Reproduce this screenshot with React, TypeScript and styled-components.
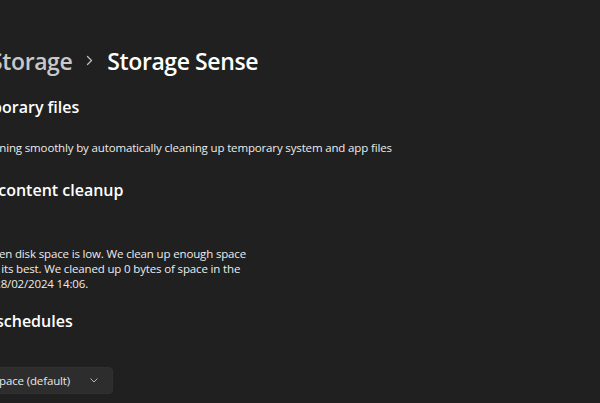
import styled, { createGlobalStyle } from "styled-components";

const GlobalStyle = createGlobalStyle`
  html, body {
    margin: 0;
    padding: 0;
    background: #202020;
    overflow: hidden;
  }
  body {
    font-family: "Open Sans", "Noto Sans", sans-serif;
    color: #ffffff;
  }
`;

// the window is scrolled/cropped so the left column sits off-screen
const Page = styled.main`
  display: flex;
  flex-direction: column;
  align-items: flex-start;
  width: 800px;
  height: 403px;
  padding-top: 43px;
  margin-left: -118px;
  box-sizing: border-box;
`;

const Breadcrumb = styled.div<{ $shift: number }>`
  display: flex;
  align-items: center;
  gap: 14px;
  height: 35px;
  margin-left: ${(p) => p.$shift}px;
  font-size: 23px;
  font-weight: 600;
  letter-spacing: -0.4px;
  white-space: nowrap;
`;

const Crumb = styled.span<{ $current?: boolean }>`
  color: ${(p) => (p.$current ? "#ffffff" : "#c8c8c8")};
`;

const SectionTitle = styled.h2<{ $mt: number; $shift: number }>`
  margin: ${(p) => p.$mt}px 0 0 ${(p) => p.$shift}px;
  height: 24px;
  line-height: 24px;
  font-size: 16px;
  font-weight: 600;
  white-space: nowrap;
`;

const BodyText = `
  font-size: 11.5px;
  letter-spacing: -0.15px;
  color: #ececec;
`;

const CheckRow = styled.label<{ $mt: number; $shift: number }>`
  display: flex;
  align-items: center;
  gap: 12px;
  margin: ${(p) => p.$mt}px 0 0 ${(p) => p.$shift}px;
  height: 24px;
  white-space: nowrap;
  ${BodyText}
`;

const CheckBox = styled.span`
  display: inline-flex;
  align-items: center;
  justify-content: center;
  width: 18px;
  height: 18px;
  border-radius: 4px;
  background: #4cc2ff;
`;

const ToggleRow = styled.div<{ $mt: number }>`
  display: flex;
  align-items: center;
  gap: 12px;
  margin-top: ${(p) => p.$mt}px;
  height: 24px;
  ${BodyText}
`;

const Switch = styled.span`
  position: relative;
  width: 38px;
  height: 18px;
  border-radius: 10px;
  border: 1px solid #cfcfcf;
  box-sizing: border-box;

  &::after {
    content: "";
    position: absolute;
    left: 4px;
    top: 4px;
    width: 8px;
    height: 8px;
    border-radius: 50%;
    background: #cfcfcf;
  }
`;

const Description = styled.p<{ $mt: number; $shift: number }>`
  margin: ${(p) => p.$mt}px 0 0 ${(p) => p.$shift}px;
  width: 374px;
  line-height: 15px;
  ${BodyText}
`;

const FieldLabel = styled.div<{ $mt: number }>`
  margin-top: ${(p) => p.$mt}px;
  height: 20px;
  line-height: 20px;
  ${BodyText}
`;

const Select = styled.button<{ $mt: number; $shift: number }>`
  display: flex;
  align-items: center;
  justify-content: space-between;
  margin: ${(p) => p.$mt}px 0 0 ${(p) => p.$shift}px;
  width: 236px;
  height: 27px;
  padding: 0 14px 0 9px;
  border: 1px solid #303030;
  border-radius: 4px;
  background: #2d2d2d;
  font-family: inherit;
  white-space: nowrap;
  box-sizing: border-box;
  ${BodyText}
  color: #e6e6e6;
`;

function Chevron() {
  return (
    <svg width="7" height="11" viewBox="0 0 7 11" fill="none">
      <path d="M1.5 1.5 L5.5 5.5 L1.5 9.5" stroke="#bdbdbd" strokeWidth="1.3" strokeLinecap="round" strokeLinejoin="round" />
    </svg>
  );
}

function ChevronDown() {
  return (
    <svg width="8" height="5" viewBox="0 0 8 5" fill="none">
      <path d="M0.8 0.8 L4 4 L7.2 0.8" stroke="#b5b5b5" strokeWidth="1" strokeLinecap="round" strokeLinejoin="round" />
    </svg>
  );
}

export default function App() {
  return (
    <>
      <GlobalStyle />
      <Page>
        <Breadcrumb $shift={-5}>
          <Crumb>System</Crumb>
          <Chevron />
          <Crumb>Storage</Crumb>
          <Chevron />
          <Crumb $current>Storage Sense</Crumb>
        </Breadcrumb>

        <SectionTitle $mt={17} $shift={-8}>Cleanup of temporary files</SectionTitle>
        <CheckRow $mt={16} $shift={-11}>
          <CheckBox>
            <svg width="10" height="8" viewBox="0 0 10 8" fill="none">
              <path d="M1 4 L4 7 L9 1" stroke="#000" strokeWidth="1.4" />
            </svg>
          </CheckBox>
          Keep Windows running smoothly by automatically cleaning up temporary system and app files
        </CheckRow>

        <SectionTitle $mt={19} $shift={-8}>Automatic User content cleanup</SectionTitle>
        <ToggleRow $mt={6}>
          <Switch />
          Off
        </ToggleRow>
        <Description $mt={14} $shift={-2}>
          Storage Sense runs when disk space is low. We clean up enough space so Windows can run at its best. We cleaned up 0 bytes of space in the past month. Last run: 28/02/2024 14:06.
        </Description>

        <SectionTitle $mt={18} $shift={-31}>Configure cleanup schedules</SectionTitle>
        <FieldLabel $mt={4}>Run Storage Sense</FieldLabel>
        <Select $mt={10} $shift={-5}>
          During low free disk space (default)
          <ChevronDown />
        </Select>
      </Page>
    </>
  );
}
